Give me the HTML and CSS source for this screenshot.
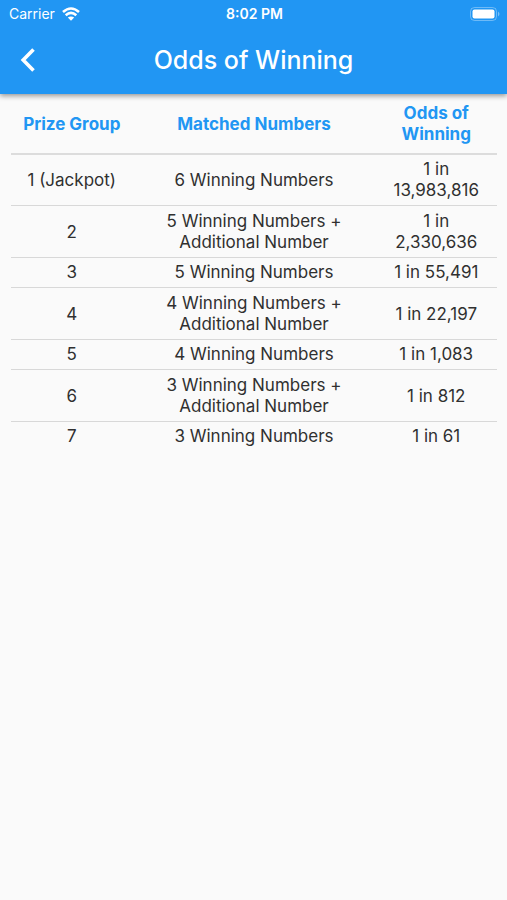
FILE: index.html
```html
<!DOCTYPE html>
<html lang="en">
<head>
<meta charset="utf-8">
<meta name="viewport" content="width=device-width, initial-scale=1">
<title>Odds of Winning</title>
<link rel="stylesheet" href="styles.css">
</head>
<body>
<header class="top">
  <div class="status">
    <div class="carrier"><span>Carrier</span>
      <svg class="wifi" viewBox="0 0 18 14" aria-hidden="true"><path d="M1 5Q9-2 17 5M3.7 8.2Q9 3.6 14.3 8.2" fill="none" stroke="currentColor" stroke-width="2.6"/><path d="M9 13.8L5.8 10.6Q9 8.2 12.2 10.6Z" fill="currentColor"/></svg>
    </div>
    <time class="clock">8:02 PM</time>
    <svg class="battery" viewBox="0 0 30 14" aria-hidden="true"><rect x=".5" y=".5" width="26" height="13" rx="4" fill="none" stroke="currentColor" opacity=".35"/><rect x="2.5" y="2.5" width="22" height="9" rx="2" fill="currentColor"/><path d="M28 4.5Q31 7 28 9.5Z" fill="currentColor" opacity=".4"/></svg>
  </div>
  <div class="bar">
    <button class="back" type="button" aria-label="Back"><svg viewBox="0 0 16 26" aria-hidden="true"><path d="M13.5 2.5L3.2 13L13.5 23.5" fill="none" stroke="currentColor" stroke-width="3.6"/></svg></button>
    <h1 class="title">Odds of Winning</h1>
  </div>
</header>
<main class="content">
  <table class="odds">
    <colgroup><col class="group"><col class="matched"><col class="chance"></colgroup>
    <thead><tr><th scope="col">Prize Group</th><th scope="col">Matched Numbers</th><th scope="col">Odds of Winning</th></tr></thead>
    <tbody>
      <tr><td>1 (Jackpot)</td><td>6 Winning Numbers</td><td>1 in 13,983,816</td></tr>
      <tr><td>2</td><td>5 Winning Numbers + Additional Number</td><td>1 in 2,330,636</td></tr>
      <tr><td>3</td><td>5 Winning Numbers</td><td>1 in 55,491</td></tr>
      <tr><td>4</td><td>4 Winning Numbers + Additional Number</td><td>1 in 22,197</td></tr>
      <tr><td>5</td><td>4 Winning Numbers</td><td>1 in 1,083</td></tr>
      <tr><td>6</td><td>3 Winning Numbers + Additional Number</td><td>1 in 812</td></tr>
      <tr><td>7</td><td>3 Winning Numbers</td><td>1 in 61</td></tr>
    </tbody>
  </table>
</main>
</body>
</html>
```
FILE: styles.css
```css
* { box-sizing: border-box; }
body {
  margin: 0;
  min-height: 100vh;
  background: #fafafa;
  color: #303030;
  font-family: Inter, sans-serif;
}
.top {
  background: #2196f3;
  color: #fff;
  box-shadow: 0 2px 5px rgba(0, 0, 0, .4);
}
.status {
  display: grid;
  grid-template-columns: 1fr auto 1fr;
  align-items: center;
  height: 27px;
  padding: 0 7px 0 9px;
  font-size: 14px;
}
.carrier { display: flex; align-items: center; gap: 7px; }
.wifi { width: 18px; height: 14px; }
.clock { font-weight: 600; }
.battery { width: 30px; height: 14px; justify-self: end; }
.bar {
  display: grid;
  grid-template-columns: 56px 1fr 56px;
  align-items: center;
  height: 67px;
  padding-bottom: 2px;
}
.back {
  display: flex;
  align-items: center;
  justify-content: center;
  height: 56px;
  padding: 0;
  border: 0;
  background: none;
  color: inherit;
}
.back svg { width: 16px; height: 26px; }
.title { margin: 0; font-size: 25px; font-weight: 500; text-align: center; }
.content { padding: 0 10px 0 11px; }
.odds {
  width: 100%;
  border-spacing: 0;
  table-layout: fixed;
  font-size: 17px;
  line-height: 21px;
  text-align: center;
}
.group, .chance { width: 25%; }
.odds th { padding: 9px 8px 8px; color: #2196f3; font-weight: 700; border-bottom: 2px solid #dcdcdc; }
.odds td { padding: 4px 8px; border-bottom: 1px solid #d8d8d8; }
.odds tr:nth-child(even) td { padding-top: 5px; }
.odds tbody tr:last-child td { border-bottom: 0; }
```
